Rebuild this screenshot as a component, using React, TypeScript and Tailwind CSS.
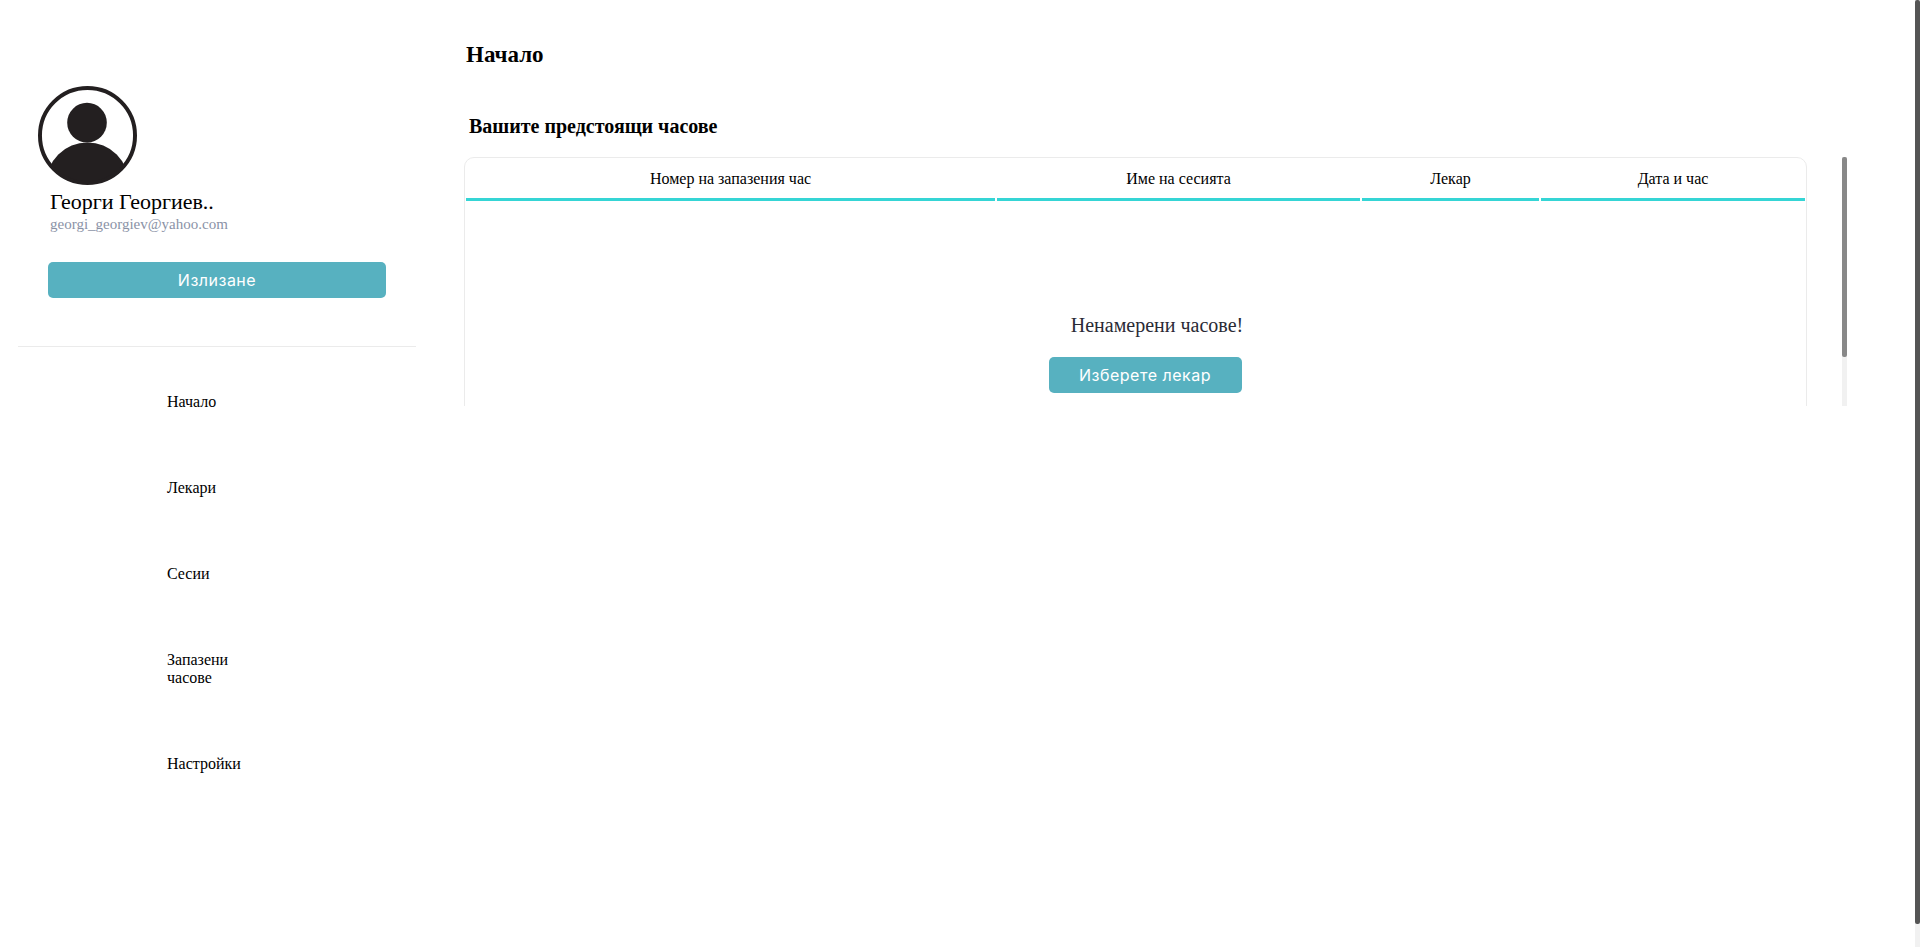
const navItems = ["Начало", "Лекари", "Сесии", "Запазени часове", "Настройки"];

const columns = [
  { label: "Номер на запазения час", width: "w-[529px]" },
  { label: "Име на сесията", width: "w-[363px]" },
  { label: "Лекар", width: "w-[177px]" },
  { label: "Дата и час", width: "w-[264px]" },
];

function Avatar() {
  return (
    <svg viewBox="0 0 100 100" className="w-[99px] h-[99px] block">
      <defs>
        <clipPath id="avatar-clip">
          <circle cx="50" cy="50" r="48" />
        </clipPath>
      </defs>
      <circle cx="49.5" cy="37" r="20" fill="#231f20" />
      <circle cx="50" cy="98.7" r="41.7" fill="#231f20" clipPath="url(#avatar-clip)" />
      <circle cx="50" cy="50" r="48" fill="none" stroke="#231f20" strokeWidth="4" />
    </svg>
  );
}

export default function App() {
  return (
    <div className="flex h-[947px] overflow-hidden bg-white font-['Liberation_Serif',serif] text-black">
      <aside className="w-[432px] shrink-0 pl-[18px] pt-[86px]">
        <div className="w-[398px] border-b border-[#ebebeb] pb-[48px]">
          <div className="pl-[20px]">
            <Avatar />
          </div>
          <div className="pl-[32px] mt-[4px] text-[22px] leading-[26px]">Георги Георгиев..</div>
          <div className="pl-[32px] text-[15px] leading-[18px] text-[#8a92a6]">georgi_georgiev@yahoo.com</div>
          <div className="pl-[30px] mt-[29px]">
            <button className="block w-[338px] h-[36px] rounded-[5px] bg-[#57b1c0] font-['Inter',sans-serif] text-[16px] font-normal tracking-[0.5px] text-white">
              Излизане
            </button>
          </div>
        </div>
        <nav className="mt-[12px]">
          {navItems.map((item) => (
            <div key={item} className="pl-[149px] py-[34px] text-[16px] leading-[18px]">
              <div className="w-[80px]">{item}</div>
            </div>
          ))}
        </nav>
      </aside>

      <main className="flex-1 pl-[32px] pt-[41px]">
        <h1 className="ml-[2px] text-[23px] leading-[28px] font-bold">Начало</h1>
        <h2 className="mt-[44px] ml-[5px] text-[20px] leading-[26px] font-bold">Вашите предстоящи часове</h2>
        <div className="mt-[18px] flex gap-[35px] h-[249px] overflow-hidden">
          <div className="w-[1343px] h-[310px] shrink-0 border border-[#ebebeb] rounded-[10px] px-[1px] pt-[1px]">
            <div className="flex gap-[2px]">
              {columns.map((col) => (
                <div
                  key={col.label}
                  className={`${col.width} h-[42px] pt-[11px] border-b-[3px] border-[#35d5d5] text-center text-[16px] leading-[18px]`}
                >
                  {col.label}
                </div>
              ))}
            </div>
            <div className="flex flex-col items-center mt-[112px] pl-[19px]">
              <p className="pl-[24px] text-[20px] leading-[24px] text-[#2a2a35]">Ненамерени часове!</p>
              <button className="mt-[20px] w-[193px] h-[36px] rounded-[5px] bg-[#57b1c0] font-['Inter',sans-serif] text-[16px] font-normal tracking-[0.5px] text-white">
                Изберете лекар
              </button>
            </div>
          </div>
          <div className="w-[5px] h-[249px] shrink-0 bg-[#f1f1f1]">
            <div className="h-[200px] rounded-[2px] bg-[#888888]" />
          </div>
        </div>
      </main>

      <div className="w-[5px] h-[947px] shrink-0 bg-[#f1f1f1]">
        <div className="h-[924px] rounded-[2px] bg-[#555555]" />
      </div>
    </div>
  );
}
